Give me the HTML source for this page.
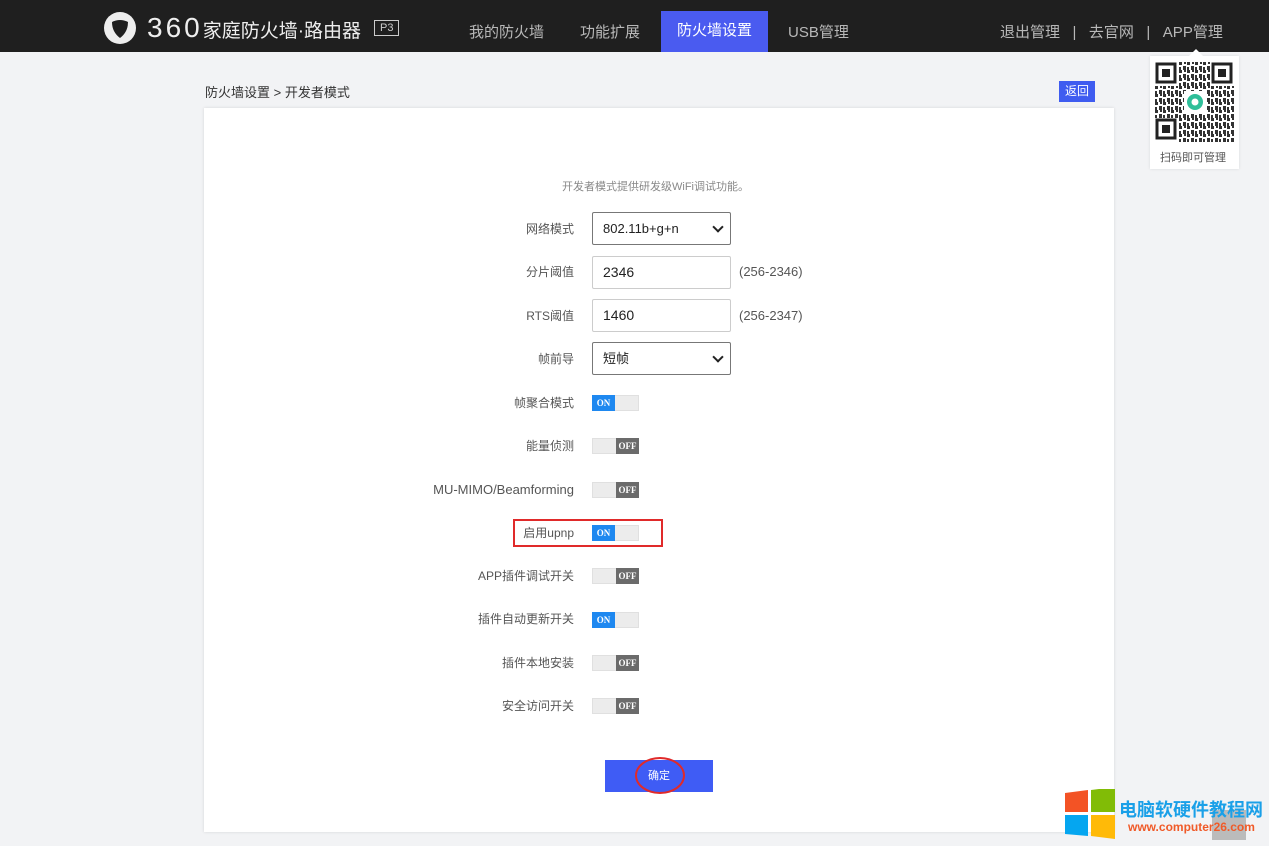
<!DOCTYPE html>
<html><head><meta charset="utf-8"><style>
*{margin:0;padding:0;box-sizing:border-box}
body{width:1269px;height:846px;overflow:hidden;background:#f2f3f5;font-family:"Liberation Sans","Noto Sans CJK SC",sans-serif;position:relative;color:#333}
.hdr{position:absolute;left:0;top:0;width:1269px;height:52px;background:#1f1f1f}
.abs{position:absolute}
.nav{color:#b8b8b8;font-size:15px;top:21px}
.tab{left:661px;top:11px;width:107px;height:41px;background:#4a5bf0;color:#fff;font-size:15px;text-align:center;line-height:40px}
.card{left:204px;top:108px;width:910px;height:724px;background:#fff;box-shadow:0 0 3px rgba(0,0,0,.12)}
.lbl{position:absolute;right:695px;font-size:12px;color:#555;text-align:right;white-space:nowrap;margin-top:-2px}
.sel,.inp{position:absolute;left:592px;width:139px;height:33px;border:1px solid #ccc;border-radius:2px;font-size:13px;color:#222;padding-left:10px;line-height:31px;background:#fff}
.sel{border-color:#777}
.sel:after{content:"";position:absolute;right:8px;top:10px;width:6px;height:6px;border-right:2px solid #222;border-bottom:2px solid #222;transform:rotate(45deg)}
.tg{position:absolute;left:592px;width:47px;height:16px;background:#ececec;border:1px solid #e0e0e0}
.tg span{position:absolute;top:-1px;height:16px;width:23px;font-size:9px;font-family:"Liberation Serif",serif;font-weight:bold;color:#fff;text-align:center;line-height:16px}
.on span{left:-1px;background:#1e88f0}
.off span{right:-1px;background:#6b6b6b}
.rng{position:absolute;left:739px;font-size:13px;color:#555}
</style></head><body>
<div class="hdr"></div>
<svg class="abs" style="left:103px;top:11px" width="34" height="34" viewBox="0 0 34 34"><circle cx="17" cy="17" r="16" fill="#eee"/><path d="M9 11 Q17 7 25 11 Q25 21 17 27 Q9 21 9 11Z" fill="#1f1f1f"/></svg>
<div class="abs" style="left:147px;top:12px;color:#eee;font-size:28px;letter-spacing:3px;line-height:32px">360<span style="font-size:19px;letter-spacing:0">家庭防火墙·路由器</span></div>
<div class="abs" style="left:374px;top:20px;border:1px solid #ccc;color:#ccc;font-size:11px;padding:0 5px;line-height:14px">P3</div>
<div class="abs nav" style="left:469px">我的防火墙</div>
<div class="abs nav" style="left:580px">功能扩展</div>
<div class="abs tab">防火墙设置</div>
<div class="abs nav" style="left:788px">USB管理</div>
<div class="abs nav" style="left:1000px;word-spacing:0">退出管理 &nbsp;&nbsp;| &nbsp;&nbsp;去官网 &nbsp;&nbsp;| &nbsp;&nbsp;APP管理</div>
<div class="abs" style="left:205px;top:82px;font-size:13px;color:#333">防火墙设置 &gt; 开发者模式</div>
<div class="abs" style="left:1059px;top:81px;width:36px;height:21px;background:#3f5cf0;color:#fff;font-size:12px;text-align:center;line-height:21px">返回</div>
<div class="abs" style="left:1150px;top:56px;width:89px;height:113px;background:#fff;box-shadow:0 0 3px rgba(0,0,0,.1)"></div>
<div class="abs" style="left:1189px;top:49px;width:0;height:0;border:7px solid transparent;border-bottom-color:#fff;border-top:0"></div>
<svg class="abs" style="left:1155px;top:62px" width="80" height="80" viewBox="0 0 80 80">
<defs><pattern id="q" width="8" height="8" patternUnits="userSpaceOnUse"><rect width="3" height="3" fill="#333"/><rect x="4" y="4" width="3" height="4" fill="#333"/><rect x="5" y="0" width="2" height="2" fill="#333"/><rect x="0" y="5" width="2" height="3" fill="#333"/></pattern></defs>
<rect width="80" height="80" fill="url(#q)"/>
<g fill="#fff"><rect width="24" height="24"/><rect x="56" width="24" height="24"/><rect y="56" width="24" height="24"/></g>
<g fill="none" stroke="#222" stroke-width="3"><rect x="2" y="2" width="18" height="18"/><rect x="58" y="2" width="18" height="18"/><rect x="2" y="58" width="18" height="18"/></g>
<g fill="#222"><rect x="7" y="7" width="8" height="8"/><rect x="63" y="7" width="8" height="8"/><rect x="7" y="63" width="8" height="8"/></g>
<rect x="29" y="29" width="22" height="22" fill="#fff"/><circle cx="40" cy="40" r="8" fill="#2fbf9a"/><circle cx="40" cy="40" r="3.5" fill="#fff"/>
</svg>
<div class="abs" style="left:1160px;top:149px;font-size:11px;color:#555">扫码即可管理</div>
<div class="abs card"></div>
<div class="abs" style="left:562px;top:178px;font-size:11px;color:#888">开发者模式提供研发级WiFi调试功能。</div>
<div class="lbl" style="top:222px">网络模式</div><div class="sel" style="top:212px">802.11b+g+n</div>
<div class="lbl" style="top:265px">分片阈值</div><div class="inp" style="top:256px;font-size:14px">2346</div><div class="rng" style="top:264px">(256-2346)</div>
<div class="lbl" style="top:309px">RTS阈值</div><div class="inp" style="top:299px;font-size:14px">1460</div><div class="rng" style="top:308px">(256-2347)</div>
<div class="lbl" style="top:352px">帧前导</div><div class="sel" style="top:342px">短帧</div>
<div class="lbl" style="top:396px">帧聚合模式</div><div class="tg on" style="top:395px"><span>ON</span></div>
<div class="lbl" style="top:439px">能量侦测</div><div class="tg off" style="top:438px"><span>OFF</span></div>
<div class="lbl" style="top:484px;font-size:13px">MU-MIMO/Beamforming</div><div class="tg off" style="top:482px"><span>OFF</span></div>
<div class="abs" style="left:513px;top:519px;width:150px;height:28px;border:2px solid #e02a2a"></div>
<div class="lbl" style="top:526px">启用upnp</div><div class="tg on" style="top:525px"><span>ON</span></div>
<div class="lbl" style="top:569px">APP插件调试开关</div><div class="tg off" style="top:568px"><span>OFF</span></div>
<div class="lbl" style="top:612px">插件自动更新开关</div><div class="tg on" style="top:612px"><span>ON</span></div>
<div class="lbl" style="top:656px">插件本地安装</div><div class="tg off" style="top:655px"><span>OFF</span></div>
<div class="lbl" style="top:699px">安全访问开关</div><div class="tg off" style="top:698px"><span>OFF</span></div>
<div class="abs" style="left:605px;top:760px;width:108px;height:32px;background:#3f5cf5;color:#fff;font-size:11px;text-align:center;line-height:32px">确定</div>
<div class="abs" style="left:635px;top:757px;width:50px;height:37px;border:2px solid #e02a2a;border-radius:50%"></div>
<div class="abs" style="left:1212px;top:810px;width:34px;height:30px;background:#bbb"></div>
<svg class="abs" style="left:1064px;top:789px" width="52" height="50" viewBox="0 0 52 50"><path d="M1 4 L24 1 V23 H1Z" fill="#f35325"/><path d="M27 1 L51 -2 V23 H27Z" fill="#81bc06"/><path d="M1 26 H24 V47 L1 45Z" fill="#05a6f0"/><path d="M27 26 H51 V50 L27 47Z" fill="#ffba08"/></svg>
<div class="abs" style="left:1119px;top:796px;font-size:18px;font-weight:bold;color:#1aa0e8">电脑软硬件教程网</div>
<div class="abs" style="left:1128px;top:820px;font-size:12px;font-weight:bold;color:#f05a28">www.computer26.com</div>
</body></html>
